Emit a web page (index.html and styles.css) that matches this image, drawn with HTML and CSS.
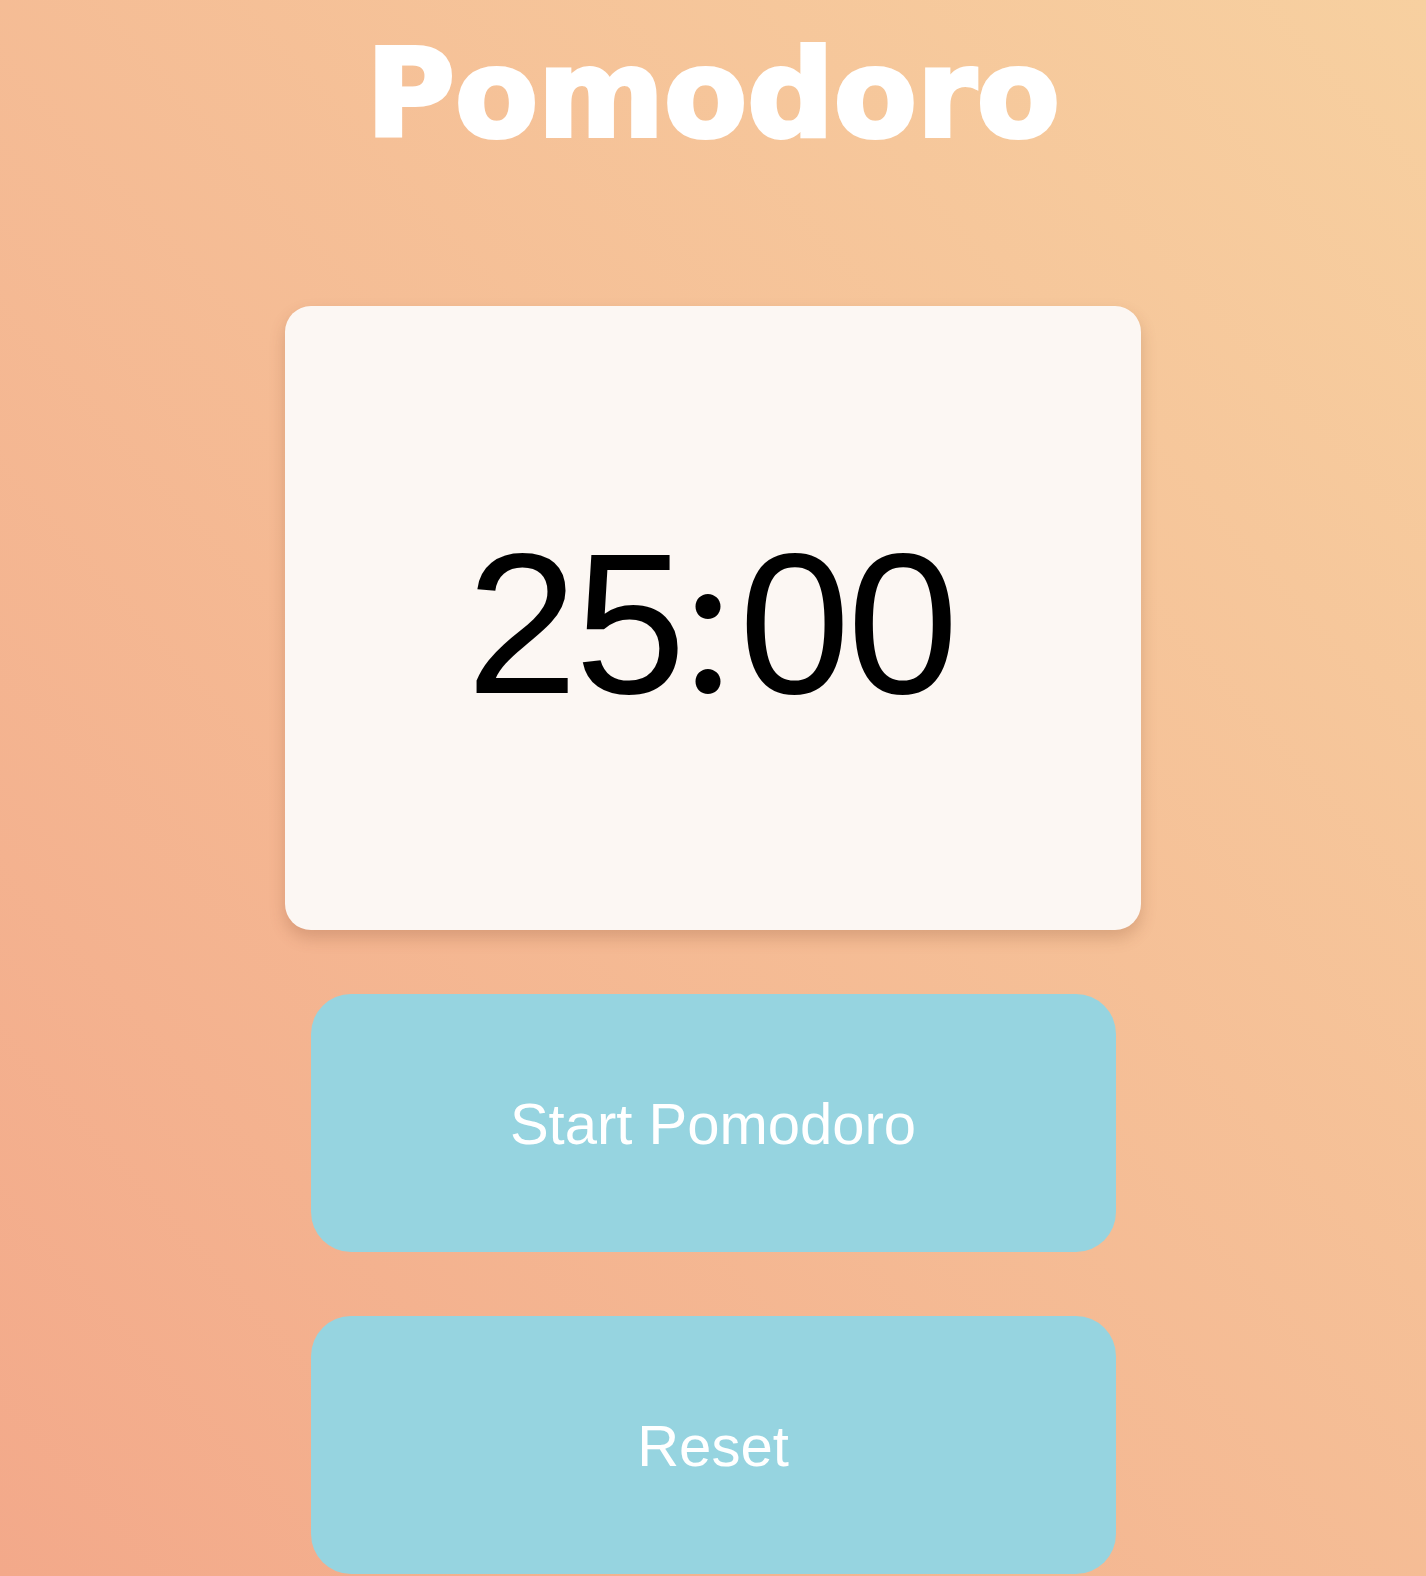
FILE: index.html
```html
<!DOCTYPE html>
<html lang="en">
<head>
<meta charset="utf-8">
<title>Pomodoro</title>
<link rel="stylesheet" href="styles.css">
</head>
<body>
<main class="app">
  <h1 class="title">Pomodoro</h1>
  <section class="timer-card">
    <div class="timer">25<span class="colon">:</span>00</div>
  </section>
  <div class="controls">
    <button class="btn">Start Pomodoro</button>
    <button class="btn">Reset</button>
  </div>
</main>
</body>
</html>
```
FILE: styles.css
```css
html, body {
  margin: 0;
  padding: 0;
}
body {
  min-height: 100vh;
  background: linear-gradient(to top right, #f3a98a, #f7d0a0);
  font-family: "Liberation Sans", Arial, sans-serif;
  overflow: hidden;
}
.app {
  display: flex;
  flex-direction: column;
  align-items: center;
}
.title {
  margin: 21px 0 0;
  font-family: "DejaVu Sans", "Liberation Sans", sans-serif;
  font-size: 121px;
  line-height: 147px;
  font-weight: 700;
  color: #fff;
  letter-spacing: 0;
  -webkit-text-stroke: 4px #fff;
}
.timer-card {
  margin-top: 138px;
  width: 856px;
  height: 624px;
  background: #fcf7f3;
  border-radius: 26px;
  box-shadow: 0 8px 16px rgba(120, 60, 30, 0.22);
  display: flex;
  align-items: center;
  justify-content: center;
}
.timer {
  font-size: 200px;
  line-height: 1;
  letter-spacing: -3px;
  color: #000;
  padding-top: 4px;
  padding-right: 4px;
}
.colon {
  font-family: Lato, "Liberation Sans", sans-serif;
  letter-spacing: 0;
  padding: 0 6px 0 0;
}
.controls {
  margin-top: 64px;
  display: flex;
  flex-direction: column;
  gap: 64px;
}
.btn {
  width: 805px;
  height: 258px;
  border: none;
  border-radius: 40px;
  background: #96d4e0;
  color: #fff;
  font-family: "Liberation Sans", Arial, sans-serif;
  font-size: 58px;
  cursor: pointer;
}
```
